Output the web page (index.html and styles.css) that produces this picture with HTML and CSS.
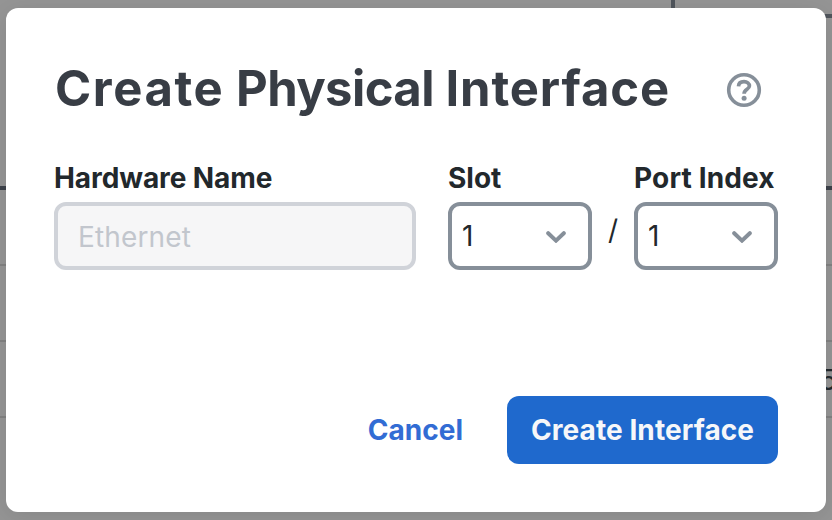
FILE: index.html
```html
<!DOCTYPE html>
<html lang="en">
<head>
<meta charset="utf-8">
<title>Create Physical Interface</title>
<link rel="stylesheet" href="styles.css">
</head>
<body>
<div class="page">
  <div class="page-top"><div class="tab"></div><div class="panel"></div></div>
  <div class="row"></div>
  <div class="row"></div>
  <div class="row row-value"><span>5</span></div>
</div>
<main class="dialog">
  <header class="header">
    <h1 class="title"><span class="wide">Create</span> <span class="tight">Physical</span> <span class="loose">Interface</span></h1>
    <svg class="help" viewBox="0 0 36 36" fill="none">
      <circle cx="18" cy="18" r="15.3" stroke="#868f99" stroke-width="3.6"/>
      <path d="M12.5 14.3C12.7 11.3 15 9.7 18 9.7C21.1 9.7 23.4 11.5 23.4 14.1C23.4 17.4 18.1 17.2 18.1 21.7" stroke="#868f99" stroke-width="3.7"/>
      <circle cx="18.1" cy="26.2" r="2.5" fill="#868f99"/>
    </svg>
  </header>
  <div class="fields">
    <div class="field name">
      <div class="label label-name">Hardware Name</div>
      <div class="box disabled">Ethernet</div>
    </div>
    <div class="field num">
      <div class="label">Slot</div>
      <div class="box select"><span>1</span>
        <svg class="chevron" viewBox="0 0 20 12"><path d="M2.2 2.2L10 9.6L17.8 2.2"/></svg>
      </div>
    </div>
    <div class="slash">/</div>
    <div class="field num">
      <div class="label label-port">Port Index</div>
      <div class="box select"><span>1</span>
        <svg class="chevron" viewBox="0 0 20 12"><path d="M2.2 2.2L10 9.6L17.8 2.2"/></svg>
      </div>
    </div>
  </div>
  <footer class="actions">
    <div class="cancel">Cancel</div>
    <div class="create"><span>Create Interface</span></div>
  </footer>
</main>
</body>
</html>
```
FILE: styles.css
```css
* { box-sizing: border-box; }
body {
  margin: 0;
  width: 832px;
  height: 520px;
  overflow: hidden;
  position: relative;
  background: #959595;
  font: 28px/34px Inter, "Liberation Sans", sans-serif;
  color: #22282c;
}
.page-top {
  height: 190px;
  border-bottom: 4px solid #3d424a;
  display: flex;
}
.tab { width: 675px; height: 18px; border-right: 4px solid #50555c; }
.panel { flex: 1; height: 18px; border-bottom: 4px solid #50555c; }
.row { height: 76px; border-bottom: 2px solid #828282; }
.row-value { padding: 21px 0 0 820px; white-space: nowrap; }
.dialog {
  position: absolute;
  left: 6px;
  top: 8px;
  width: 820px;
  height: 504px;
  padding: 48px;
  display: flex;
  flex-direction: column;
  border-radius: 12px;
  background: #fff;
  box-shadow: 0 4px 24px rgba(0, 0, 0, .1);
}
.header {
  height: 66px;
  display: flex;
  align-items: center;
  justify-content: space-between;
}
.title {
  margin: 0;
  padding-left: 1px;
  font-size: 49px;
  line-height: 66px;
  font-weight: 700;
  color: #383d45;
  white-space: nowrap;
}
.wide { letter-spacing: 1.6px; }
.tight { letter-spacing: -.6px; }
.loose { letter-spacing: .85px; }
.help { width: 36px; height: 36px; margin: 2px 16px 0 0; flex: none; }
.fields { display: flex; margin-top: 38px; }
.field { flex: none; }
.name { width: 362px; margin-right: 32px; }
.num { width: 144px; }
.label {
  height: 42px;
  line-height: 37px;
  font-weight: 700;
  white-space: nowrap;
}
.label-name { letter-spacing: -.08px; }
.label-port { letter-spacing: .15px; }
.box {
  height: 68px;
  border: 4px solid #868f99;
  border-radius: 12px;
  display: flex;
  align-items: center;
}
.disabled {
  padding: 1px 0 0 20px;
  border-color: #d0d3d9;
  background: #f6f6f7;
  color: #c2c6cd;
  letter-spacing: .15px;
}
.select { padding: 1px 22px 0 10px; justify-content: space-between; }
.select span { margin-top: -2px; }
.chevron {
  width: 20px;
  height: 12px;
  margin-top: 1px;
  fill: none;
  stroke: #868f99;
  stroke-width: 4;
  stroke-linecap: round;
}
.slash { width: 42px; text-align: center; padding-top: 53px; }
.actions {
  margin-top: auto;
  display: flex;
  align-items: center;
  justify-content: flex-end;
  gap: 44px;
  font-weight: 700;
}
.cancel { color: #326cd4; }
.create {
  width: 271px;
  height: 68px;
  display: flex;
  align-items: center;
  justify-content: center;
  border-radius: 12px;
  background: #1f69cd;
  color: #f6f7f9;
  letter-spacing: .08px;
}
```
